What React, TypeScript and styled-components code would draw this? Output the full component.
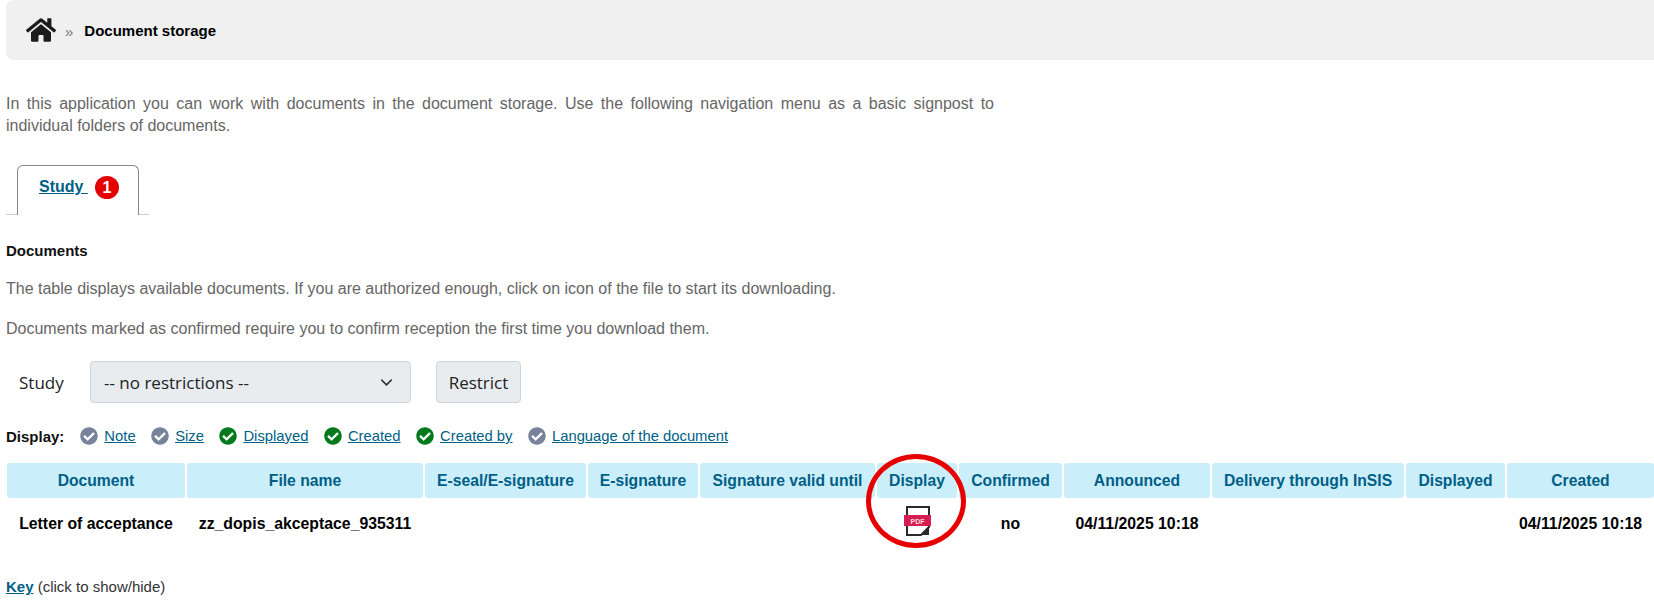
import React from 'react';
import styled, { createGlobalStyle } from 'styled-components';
import { FaHome, FaCheckCircle } from 'react-icons/fa';
import { FiChevronDown } from 'react-icons/fi';

interface DisplayOption {
    name: string;
    active: boolean;
}

const displayOptions: DisplayOption[] = [
    { name: 'Note', active: false },
    { name: 'Size', active: false },
    { name: 'Displayed', active: true },
    { name: 'Created', active: true },
    { name: 'Created by', active: true },
    { name: 'Language of the document', active: false },
];

const columns = [
    { name: 'Document', width: 178 },
    { name: 'File name', width: 236 },
    { name: 'E-seal/E-signature', width: 161 },
    { name: 'E-signature', width: 110 },
    { name: 'Signature valid until', width: 175 },
    { name: 'Display', width: 80 },
    { name: 'Confirmed', width: 103 },
    { name: 'Announced', width: 146 },
    { name: 'Delivery through InSIS', width: 192 },
    { name: 'Displayed', width: 99 },
    { name: 'Created', width: 147 },
];

const PdfIcon = () => (
    <svg width="27" height="30" viewBox="0 0 27 30">
        <path d="M3 9V1H25V21L17 29H3V20" fill="none" stroke="#2a2a2a" strokeWidth="2" />
        <path d="M17 29L25 21V29Z" fill="#2a2a2a" />
        <rect x="0" y="9" width="27" height="11" fill="#d81e50" />
        <text x="13.5" y="17.5" textAnchor="middle" fontSize="7" fontWeight="700" fontFamily="Liberation Sans, sans-serif" fill="#ffd9e3">PDF</text>
    </svg>
);

const App = () => (
    <>
        <GlobalStyle />
        <Page>
            <Breadcrumb>
                <FaHome size={30} color="#1c1c1c" />
                <Separator>»</Separator>
                <Current>Document storage</Current>
            </Breadcrumb>

            <Intro>
                In this application you can work with documents in the document storage. Use the following navigation menu as a basic signpost to individual folders of documents.
            </Intro>

            <TabBar>
                <Tab>
                    <TabLink href="#">Study&nbsp;</TabLink>
                    <Badge>1</Badge>
                </Tab>
            </TabBar>

            <SectionTitle>Documents</SectionTitle>
            <Note>The table displays available documents. If you are authorized enough, click on icon of the file to start its downloading.</Note>
            <Note>Documents marked as confirmed require you to confirm reception the first time you download them.</Note>

            <FilterRow>
                <FilterLabel>Study</FilterLabel>
                <SelectBox>
                    <span>-- no restrictions --</span>
                    <FiChevronDown size={19} color="#333" />
                </SelectBox>
                <RestrictButton>Restrict</RestrictButton>
            </FilterRow>

            <DisplayRow>
                <DisplayLabel>Display:</DisplayLabel>
                {displayOptions.map((option) => (
                    <DisplayOptionItem key={option.name}>
                        <FaCheckCircle size={18} color={option.active ? '#007a1c' : '#76839a'} />
                        <DisplayLink href="#">{option.name}</DisplayLink>
                    </DisplayOptionItem>
                ))}
            </DisplayRow>

            <TableWrap>
                <DocTable>
                    <colgroup>
                        {columns.map((column) => (
                            <col key={column.name} style={{ width: column.width }} />
                        ))}
                    </colgroup>
                    <thead>
                        <tr>
                            {columns.map((column) => (
                                <HeadCell key={column.name}>{column.name}</HeadCell>
                            ))}
                        </tr>
                    </thead>
                    <tbody>
                        <tr>
                            <BodyCell>Letter of acceptance</BodyCell>
                            <BodyCell>zz_dopis_akceptace_935311</BodyCell>
                            <BodyCell />
                            <BodyCell />
                            <BodyCell />
                            <BodyCell><PdfIcon /></BodyCell>
                            <BodyCell>no</BodyCell>
                            <BodyCell>04/11/2025 10:18</BodyCell>
                            <BodyCell />
                            <BodyCell />
                            <BodyCell>04/11/2025 10:18</BodyCell>
                        </tr>
                    </tbody>
                </DocTable>
                <Highlight />
            </TableWrap>

            <KeyLine>
                <KeyLink href="#">Key</KeyLink> (click to show/hide)
            </KeyLine>
        </Page>
    </>
);

export default App;

const GlobalStyle = createGlobalStyle`
  html, body {
    margin: 0;
    padding: 0;
    background: #fff;
  }
  body {
    font-family: "Liberation Sans", Arial, sans-serif;
    font-size: 15px;
    overflow: hidden;
  }
`;

const Page = styled.div`
  width: 1654px;
  height: 611px;
  padding-left: 6px;
  box-sizing: border-box;
`;

const Breadcrumb = styled.div`
  display: flex;
  align-items: center;
  height: 60px;
  padding-left: 20px;
  background: #f0f0f0;
  border-radius: 8px 0 0 8px;
`;

const Separator = styled.span`
  margin: 2px 11px 0 9px;
  font-size: 15px;
  color: #777;
`;

const Current = styled.span`
  font-size: 15px;
  font-weight: 700;
  color: #000;
`;

const Intro = styled.p`
  width: 988px;
  margin: 33px 0 0;
  font-size: 16px;
  line-height: 22px;
  color: #666;
  text-align: justify;
`;

const TabBar = styled.div`
  display: flex;
  width: 143px;
  height: 50px;
  margin-top: 28px;
  padding-left: 11px;
  box-sizing: border-box;
  border-bottom: 1px solid #ccc;
`;

const Tab = styled.div`
  display: flex;
  align-items: flex-start;
  gap: 7px;
  width: 122px;
  height: 50px;
  padding: 10px 0 0 21px;
  box-sizing: border-box;
  background: #fff;
  border: 1px solid #888;
  border-bottom: none;
  border-radius: 6px 6px 0 0;
`;

const TabLink = styled.a`
  font-size: 16px;
  line-height: 22px;
  font-weight: 700;
  color: #005f85;
`;

const Badge = styled.span`
  display: flex;
  align-items: center;
  justify-content: center;
  width: 24px;
  height: 23px;
  border-radius: 50%;
  background: #e40000;
  color: #fff;
  font-size: 16px;
  font-weight: 700;
`;

const SectionTitle = styled.div`
  margin-top: 27px;
  font-size: 15px;
  line-height: 18px;
  font-weight: 700;
  color: #111;
`;

const Note = styled.p`
  margin: 18px 0 0;
  font-size: 16px;
  line-height: 22px;
  color: #666;
`;

const FilterRow = styled.div`
  display: flex;
  align-items: center;
  height: 42px;
  margin-top: 21px;
  padding-left: 13px;
  font-family: "Open Sans", sans-serif;
  font-size: 17px;
  color: #222;
`;

const FilterLabel = styled.span`
  width: 71px;
`;

const SelectBox = styled.div`
  display: flex;
  align-items: center;
  justify-content: space-between;
  width: 321px;
  height: 42px;
  padding: 0 14px 0 13px;
  box-sizing: border-box;
  background: #e9ecef;
  border: 1px solid #ced4da;
  border-radius: 4px;
`;

const RestrictButton = styled.div`
  display: flex;
  align-items: center;
  justify-content: center;
  width: 85px;
  height: 42px;
  margin-left: 25px;
  box-sizing: border-box;
  background: #e9ecef;
  border: 1px solid #ced4da;
  border-radius: 4px;
`;

const DisplayRow = styled.div`
  display: flex;
  align-items: center;
  height: 20px;
  margin-top: 23px;
  font-size: 14.8px;
`;

const DisplayLabel = styled.span`
  margin-right: 16px;
  font-size: 15px;
  font-weight: 700;
  color: #111;
`;

const DisplayOptionItem = styled.span`
  display: flex;
  align-items: center;
  gap: 6px;
  margin-right: 15.5px;
`;

const DisplayLink = styled.a`
  color: #005f85;
`;

const TableWrap = styled.div`
  position: relative;
  margin-top: 17px;
`;

const DocTable = styled.table`
  width: 1651px;
  table-layout: fixed;
  border-collapse: separate;
  border-spacing: 2px 0;
  margin-left: -1px;
`;

const HeadCell = styled.th`
  height: 35px;
  padding: 0;
  background: #cbeefb;
  border-radius: 3px;
  font-size: 15.7px;
  font-weight: 700;
  color: #005f85;
  text-align: center;
  white-space: nowrap;
`;

const BodyCell = styled.td`
  height: 52px;
  padding: 0;
  font-size: 15.8px;
  font-weight: 700;
  color: #000;
  text-align: center;
  white-space: nowrap;
  svg {
    display: block;
    margin: 0 auto 7px;
  }
`;

const Highlight = styled.div`
  position: absolute;
  left: 860px;
  top: -9px;
  width: 100px;
  height: 94px;
  box-sizing: border-box;
  border: 5px solid #e60000;
  border-radius: 50%;
`;

const KeyLine = styled.div`
  margin-top: 28px;
  font-size: 15px;
  color: #333;
`;

const KeyLink = styled.a`
  font-weight: 700;
  color: #005f85;
`;
